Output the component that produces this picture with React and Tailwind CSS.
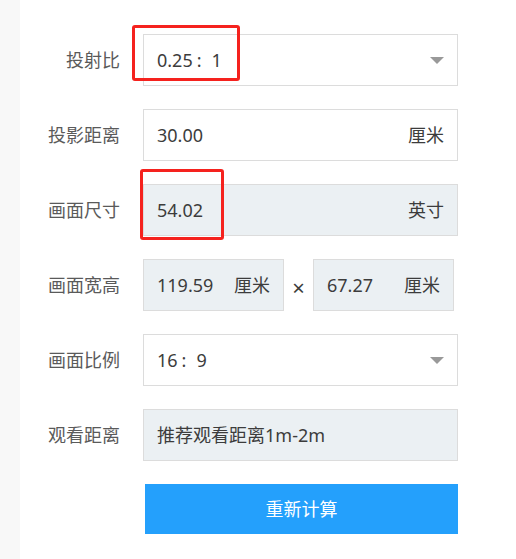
import { useState } from 'react';

const font = { fontFamily: '"Noto Sans", "Noto Sans CJK SC", sans-serif' };

function Caret() {
  return (
    <svg width="14" height="7" viewBox="0 0 14 7" className="shrink-0">
      <path d="M0 0 H14 L7 7 Z" fill="#999999" />
    </svg>
  );
}

function Ratio({ a, b }) {
  return (
    <span className="flex items-center">
      <span>{a}</span>
      <span className="ml-[4px] mr-[10px]">:</span>
      <span>{b}</span>
    </span>
  );
}

function Row({ label, children }) {
  return (
    <div className="flex items-center">
      <div className="w-[100px] text-right text-[18px] text-[#5a5a5a]">{label}</div>
      <div className="ml-[23px]">{children}</div>
    </div>
  );
}

function Field({ value, unit, readOnly, select, width = 'w-[315px]' }) {
  return (
    <div
      className={`${width} h-[52px] flex items-center justify-between border border-[#dcdcdc] px-[13px] text-[18px] text-[#3c3c3c] ${
        readOnly ? 'bg-[#ebf0f3]' : 'bg-white'
      }`}
    >
      <span>{value}</span>
      {unit && <span>{unit}</span>}
      {select && <Caret />}
    </div>
  );
}

export default function App() {
  const [ratio] = useState(['0.25', '1']);

  return (
    <div className="relative flex min-h-[559px] w-[516px] bg-white" style={font}>
      <div className="w-[20px] shrink-0 bg-[#f8f8f8]" />
      <div className="flex flex-col gap-[23px] pt-[34px]">
        <Row label="投射比">
          <Field value={<Ratio a={ratio[0]} b={ratio[1]} />} select />
        </Row>
        <Row label="投影距离">
          <Field value="30.00" unit="厘米" />
        </Row>
        <Row label="画面尺寸">
          <Field value="54.02" unit="英寸" readOnly />
        </Row>
        <Row label="画面宽高">
          <div className="flex items-center">
            <Field value="119.59" unit="厘米" readOnly width="w-[141px]" />
            <span className="w-[29px] pt-[4px] text-center text-[22px] text-[#3c3c3c]">×</span>
            <Field value="67.27" unit="厘米" readOnly width="w-[141px]" />
          </div>
        </Row>
        <Row label="画面比例">
          <Field value={<Ratio a="16" b="9" />} select />
        </Row>
        <Row label="观看距离">
          <Field value="推荐观看距离1m-2m" readOnly />
        </Row>
        <button className="ml-[125px] h-[50px] w-[313px] bg-[#24a0fc] text-[18px] text-white">
          重新计算
        </button>
      </div>

      <div className="absolute left-[132px] top-[25px] h-[56px] w-[108px] rounded-[3px] border-[3px] border-[#f5221e]" />
      <div className="absolute left-[140px] top-[169px] h-[71px] w-[84px] rounded-[3px] border-[3px] border-[#f5221e]" />
    </div>
  );
}
